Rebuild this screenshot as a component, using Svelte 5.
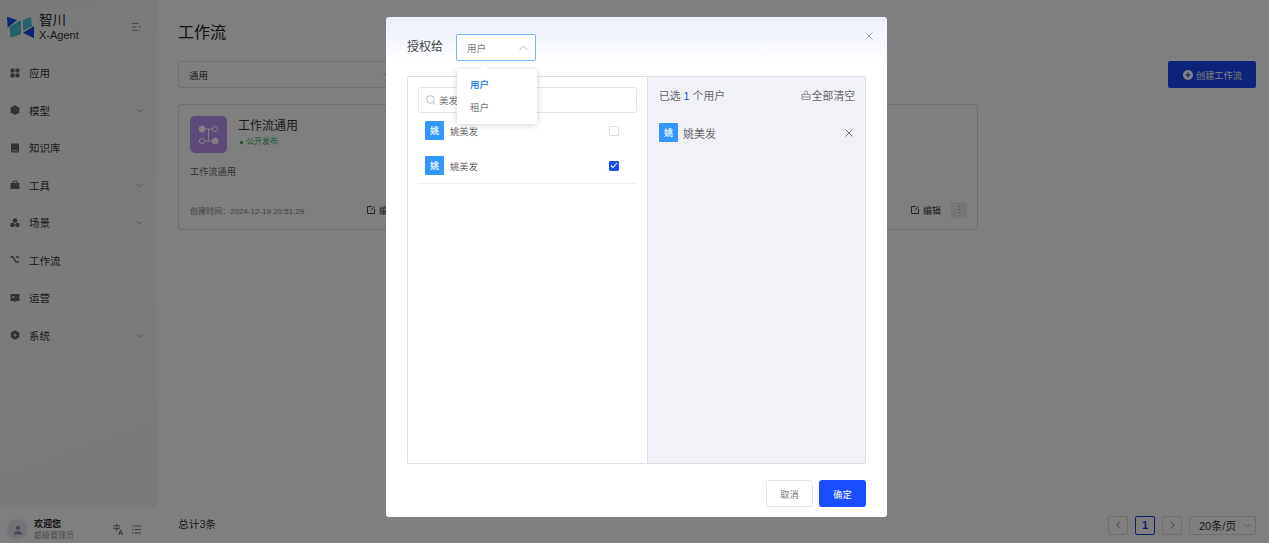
<script>
  const menu = [
    { label: "应用", icon: "apps" },
    { label: "模型", icon: "cube", arrow: true },
    { label: "知识库", icon: "book" },
    { label: "工具", icon: "case", arrow: true },
    { label: "场景", icon: "nodes", arrow: true },
    { label: "工作流", icon: "flow" },
    { label: "运营", icon: "board" },
    { label: "系统", icon: "gear", arrow: true }
  ];

  // the dialog covers the other two cards, only the first has its text showing
  const cards = [
    { title: "工作流通用", desc: "工作流通用", time: "2024-12-19 20:51:29", actions: true },
    {},
    { actions: true }
  ];
</script>

{#snippet avatar()}
  <span class="avatar">姚</span>
{/snippet}

<div class="page">
  <aside class="sidebar">
    <div class="side-top">
      <div class="brand">
        <svg class="logo" width="27" height="23" viewBox="0 0 27 23">
          <path d="M0 .7L10 4L.7 11.700Z" fill="#1a4de0" />
          <path d="M2.700 10.700L14 4V18.300L3.300 21.700Z" fill="#4cc0d4" />
          <path d="M16 4L24 1L25 10L16 15Z" fill="#4cc0d4" />
          <path d="M27 10V22.300L16 16.700Z" fill="#1a4de0" />
        </svg>
        <div class="brand-text">
          <div class="brand-name">智川</div>
          <div class="brand-sub">X-Agent</div>
        </div>
        <svg class="collapse" width="9" height="8" viewBox="0 0 9 8" fill="none" stroke="#888" stroke-width="0.900">
          <path d="M0 .5h6.500M0 4h4.500M0 7.500h6.500M9 2.500L7.500 4 9 5.500" />
        </svg>
      </div>
      <nav class="menu">
        {#each menu as item}
          <div class="menu-item">
            <svg class="menu-icon" width="10" height="10" viewBox="0 0 10 10" fill="#666">
              {#if item.icon === "apps"}
                <rect x="0.500" y="0.500" width="4" height="4" rx="1" /><rect x="5.500" y="0.500" width="4" height="4" rx="1" />
                <rect x="0.500" y="5.500" width="4" height="4" rx="1" /><rect x="5.500" y="5.500" width="4" height="4" rx="1" />
              {:else if item.icon === "cube"}
                <path d="M5 0.300L9.500 2.700V7.500L5 9.900L0.500 7.500V2.700Z" />
              {:else if item.icon === "book"}
                <path d="M1 0.500h8v9H2.500A1.500 1.500 0 0 1 1 8Z" /><rect x="2.500" y="7" width="5.500" height="1.200" fill="#bbb" />
              {:else if item.icon === "case"}
                <path d="M0.500 3h9v6h-9Z" /><path d="M3 3V1.200h4V3" fill="none" stroke="#666" />
              {:else if item.icon === "nodes"}
                <circle cx="5" cy="2.500" r="2.300" /><circle cx="2.500" cy="7" r="2.300" /><circle cx="7.500" cy="7" r="2.300" />
              {:else if item.icon === "flow"}
                <path d="M0.500 2h2.500l3 5h3M6 2h3" fill="none" stroke="#666" stroke-width="1.300" />
              {:else if item.icon === "board"}
                <path d="M0.500 1h9v7h-3.500L5 9.500 4 8H0.500Z" /><rect x="2" y="3" width="2.500" height="2" fill="#bbb" />
              {:else}
                <path d="M5 0.300L9.300 2.700V7.300L5 9.700L0.700 7.300V2.700Z" /><circle cx="5" cy="5" r="1.600" fill="#ccc" />
              {/if}
            </svg>
            <span class="menu-label">{item.label}</span>
            {#if item.arrow}
              <svg class="chevron" width="7" height="5" viewBox="0 0 7 5" fill="none" stroke="#999" stroke-width="0.800"><path d="M0.500 1L3.500 4L6.500 1" /></svg>
            {/if}
          </div>
        {/each}
      </nav>
    </div>
    <div class="user">
      <div class="user-avatar">
        <svg width="10" height="10" viewBox="0 0 10 10" fill="#8a94a8"><circle cx="5" cy="3" r="2.200" /><path d="M0.800 9.500C1 6.800 3 6 5 6s4 .8 4.200 3.500Z" /></svg>
      </div>
      <div class="user-text">
        <div class="user-name">欢迎您</div>
        <div class="user-role">超级管理员</div>
      </div>
      <span class="lang"><span>中</span><span class="lang-a">A</span></span>
      <svg width="9" height="9" viewBox="0 0 9 9" fill="none" stroke="#666" stroke-width="0.900"><path d="M0 1h1.300M2.500 1H9M0 4.500h1.300M2.500 4.500H9M0 8h1.300M2.500 8H9" /></svg>
    </div>
  </aside>

  <main class="main">
    <h1 class="title">工作流</h1>
    <div class="toolbar">
      <div class="filter">
        通用
        <svg width="7" height="5" viewBox="0 0 7 5" fill="none" stroke="#999" stroke-width="0.800"><path d="M0.500 1L3.500 4L6.500 1" /></svg>
      </div>
      <button class="create">
        <svg width="10" height="10" viewBox="0 0 10 10"><circle cx="5" cy="5" r="5" fill="#fff" /><path d="M5 2.500v5M2.500 5h5" stroke="#1a45d8" stroke-width="1.200" /></svg>
        创建工作流
      </button>
    </div>
    <div class="cards">
      {#each cards as card}
        <section class="card">
          {#if card.title}
            <div class="card-head">
              <div class="card-icon">
                <svg width="22" height="20" viewBox="0 0 22 20" fill="none" stroke="#fff" stroke-width="1">
                  <circle cx="4" cy="4" r="3" fill="#fff" /><circle cx="17" cy="4" r="2.600" />
                  <circle cx="4" cy="16" r="2.600" /><circle cx="17" cy="16" r="3" fill="#fff" />
                  <path d="M7 4h7M7 16h7M10.500 4v12" />
                </svg>
              </div>
              <div>
                <div class="card-title">{card.title}</div>
                <div class="card-status"><i class="dot"></i>公开发布</div>
              </div>
            </div>
            <div class="card-desc">{card.desc}</div>
          {/if}
          {#if card.actions}
            <div class="card-foot">
              <span class="card-time">{card.time ? `创建时间：${card.time}` : ""}</span>
              <span class="edit">
                <svg width="8" height="8" viewBox="0 0 8 8" fill="none" stroke="#333" stroke-width="0.900"><path d="M5 .5H.5v7h7V3M3.500 4.500L7.500 .5" /></svg>
                编辑
              </span>
              <span class="more">⋮</span>
            </div>
          {/if}
        </section>
      {/each}
    </div>
    <footer class="footer">
      <span class="total">总计3条</span>
      <div class="pager">
        <span class="pg">
          <svg width="5" height="8" viewBox="0 0 5 8" fill="none" stroke="#888"><path d="M4 .5L1 4l3 3.500" /></svg>
        </span>
        <span class="pg current">1</span>
        <span class="pg">
          <svg width="5" height="8" viewBox="0 0 5 8" fill="none" stroke="#888"><path d="M1 .5L4 4 1 7.500" /></svg>
        </span>
        <span class="size">20条/页
          <svg width="7" height="5" viewBox="0 0 7 5" fill="none" stroke="#999" stroke-width="0.800"><path d="M0.500 1L3.500 4L6.500 1" /></svg>
        </span>
      </div>
    </footer>
  </main>

  <div class="mask"></div>

  <div class="dialog">
    <header class="dialog-head">
      <span class="dialog-title">授权给</span>
      <div class="select">
        用户
        <svg width="9" height="6" viewBox="0 0 9 6" fill="none" stroke="#aaa" stroke-width="0.900"><path d="M.5 5L4.500 1l4 4" /></svg>
      </div>
      <svg class="close" width="8" height="8" viewBox="0 0 8 8" stroke="#999" stroke-width="0.800"><path d="M.5 .5l7 7M7.500 .5l-7 7" /></svg>
    </header>

    <div class="transfer">
      <div class="pane-left">
        <div class="search">
          <svg width="10" height="10" viewBox="0 0 10 10" fill="none" stroke="#aaa" stroke-width="0.800"><circle cx="4.500" cy="4.500" r="3.800" /><path d="M7.300 7.300L9.500 9.500" /></svg>
          美发
        </div>
        <div class="row">
          {@render avatar()}
          <span class="row-name">姚美发</span>
          <span class="check"></span>
        </div>
        <div class="row last">
          {@render avatar()}
          <span class="row-name">姚美发</span>
          <span class="check on">
            <svg width="8" height="7" viewBox="0 0 8 7" fill="none" stroke="#fff" stroke-width="1.100"><path d="M1 3.500l2 2 4-4.500" /></svg>
          </span>
        </div>
      </div>
      <div class="pane-right">
        <div class="right-head">
          <span>已选 <b>1</b> 个用户</span>
          <span class="clear">
            <svg width="10" height="10" viewBox="0 0 10 10" fill="none" stroke="#777" stroke-width="0.800"><path d="M3.500 4V2.500a1.500 1.500 0 0 1 3 0V4M1 4.500h8v5H1ZM1 7h8" /></svg>
            全部清空
          </span>
        </div>
        <div class="picked">
          {@render avatar()}
          <span class="picked-name">姚美发</span>
          <svg width="8" height="8" viewBox="0 0 8 8" stroke="#666" stroke-width="0.900"><path d="M.5 .5l7 7M7.500 .5l-7 7" /></svg>
        </div>
      </div>
    </div>

    <div class="dialog-foot">
      <button class="btn">取消</button>
      <button class="btn primary">确定</button>
    </div>

    <div class="dropdown">
      <span class="arrow"></span>
      <div class="opt active">用户</div>
      <div class="opt">租户</div>
    </div>
  </div>
</div>

<style>
  :global(body) {
    margin: 0;
    background: #fff;
    font-family: "Liberation Sans", "Noto Sans CJK SC", sans-serif;
    color: #333;
  }

  .page {
    position: relative;
    display: flex;
    width: 1269px;
    height: 543px;
    overflow: hidden;
  }

  .sidebar {
    display: flex;
    flex-direction: column;
    width: 157px;
    height: 543px;
    flex-shrink: 0;
  }

  .side-top {
    display: flex;
    flex-direction: column;
    flex: 1;
    background: linear-gradient(160deg, #f5f5f5, #f8f8f8 55%, #f4f4f4);
  }

  .brand {
    display: flex;
    align-items: center;
    height: 38px;
    padding: 8px 16px 0 7px;
  }

  .logo {
    margin: 1px 5px 0 0;
  }

  .brand-text {
    flex: 1;
  }

  .brand-name {
    font-size: 13.500px;
    line-height: 15px;
    color: #222;
  }

  .brand-sub {
    font-size: 11px;
    line-height: 14px;
    color: #333;
  }

  .menu {
    display: flex;
    flex-direction: column;
    margin-top: 8px;
    flex: 1;
  }

  .menu-item {
    display: flex;
    align-items: center;
    height: 37.5px;
    padding: 0 14px 0 10px;
  }

  .menu-icon {
    margin-right: 9px;
  }

  .menu-label {
    flex: 1;
    font-size: 10.500px;
    color: #333;
  }

  .user {
    display: flex;
    align-items: center;
    box-sizing: border-box;
    height: 36px;
    padding: 9px 16px 0 7px;
    gap: 6px;
  }

  .user-avatar {
    display: flex;
    align-items: center;
    justify-content: center;
    width: 21px;
    height: 21px;
    border-radius: 50%;
    background: #e6e9f0;
  }

  .user-text {
    flex: 1;
  }

  .user-name {
    font-size: 9px;
    line-height: 11px;
    font-weight: 700;
    color: #222;
  }

  .user-role {
    font-size: 8px;
    line-height: 11px;
    color: #999;
  }

  .lang {
    display: flex;
    flex-direction: column;
    width: 10px;
    margin-right: 3px;
    font-size: 7px;
    line-height: 5px;
    color: #444;
  }

  .lang-a {
    align-self: flex-end;
  }

  .main {
    display: flex;
    flex-direction: column;
    flex: 1;
    padding: 0 13px 0 21px;
    min-width: 0;
  }

  .title {
    margin: 21px 0 0;
    font-size: 16px;
    line-height: 23px;
    font-weight: 400;
    color: #222;
  }

  .toolbar {
    display: flex;
    align-items: center;
    justify-content: space-between;
    margin-top: 17px;
  }

  .filter {
    display: flex;
    align-items: center;
    justify-content: space-between;
    box-sizing: border-box;
    width: 216px;
    height: 27px;
    padding: 0 3px 0 10px;
    border: 1px solid #ddd;
    border-radius: 3px;
    font-size: 9.500px;
    color: #444;
  }

  .create {
    display: flex;
    align-items: center;
    gap: 3px;
    box-sizing: border-box;
    width: 88px;
    height: 27px;
    padding: 0 0 0 15px;
    border: 0;
    border-radius: 2px;
    background: #1a45f0;
    color: #fff;
    font: inherit;
    font-size: 9.200px;
  }

  .cards {
    display: flex;
    gap: 16px;
    margin-top: 16px;
  }

  .card {
    display: flex;
    flex-direction: column;
    box-sizing: border-box;
    width: 256px;
    height: 126px;
    padding: 11px 10px 11px 11px;
    border: 1px solid #ddd;
    border-radius: 3px;
  }

  .card-head {
    display: flex;
    gap: 11px;
  }

  .card-icon {
    display: flex;
    align-items: center;
    justify-content: center;
    width: 37px;
    height: 37px;
    border-radius: 5px;
    background: #bc94f2;
  }

  .card-title {
    margin-top: 2px;
    font-size: 12px;
    line-height: 16px;
    color: #333;
  }

  .card-status {
    display: flex;
    align-items: center;
    margin-top: 2px;
    font-size: 8px;
    line-height: 12px;
    color: #27ae60;
  }

  .dot {
    width: 3px;
    height: 3px;
    margin: 0 3px 0 2px;
    border-radius: 50%;
    background: #22a83a;
  }

  .card-desc {
    margin-top: 12px;
    font-size: 9.200px;
    line-height: 14px;
    color: #666;
  }

  .card-foot {
    display: flex;
    align-items: center;
    margin-top: auto;
    height: 16px;
  }

  .card-time {
    flex: 1;
    font-size: 8px;
    color: #888;
  }

  .edit {
    display: flex;
    align-items: center;
    gap: 4px;
    margin-right: 10px;
    font-size: 9px;
    color: #333;
  }

  .more {
    width: 16px;
    height: 16px;
    border-radius: 2px;
    background: #eee;
    font-size: 9px;
    line-height: 16px;
    text-align: center;
    color: #777;
  }

  .footer {
    display: flex;
    align-items: center;
    justify-content: space-between;
    margin-top: auto;
    height: 36px;
  }

  .total {
    margin-bottom: 3px;
    font-size: 10.700px;
    color: #333;
  }

  .pager {
    display: flex;
    align-items: center;
    gap: 7px;
  }

  .pg {
    display: flex;
    align-items: center;
    justify-content: center;
    box-sizing: border-box;
    width: 20px;
    height: 19px;
    border: 1px solid #ddd;
    border-radius: 2px;
  }

  .pg.current {
    border-color: #1a45d8;
    color: #1a45d8;
    font-size: 11px;
    font-weight: 700;
  }

  .size {
    display: flex;
    align-items: center;
    justify-content: space-between;
    box-sizing: border-box;
    width: 67px;
    height: 19px;
    padding: 0 4px 0 9px;
    border: 1px solid #ddd;
    border-radius: 2px;
    font-size: 11px;
    color: #333;
  }

  .mask {
    position: absolute;
    inset: 0;
    background: rgba(0, 0, 0, 0.5);
  }

  .dialog {
    position: absolute;
    left: 386px;
    top: 17px;
    display: flex;
    flex-direction: column;
    box-sizing: border-box;
    width: 501px;
    height: 500px;
    padding: 0 21px;
    border-radius: 3px;
    background: linear-gradient(#eaeffb 0, #fff 46px);
  }

  .dialog-head {
    display: flex;
    align-items: center;
    height: 59px;
    flex-shrink: 0;
  }

  .dialog-title {
    margin: -2px 14px 0 0;
    font-size: 12px;
    color: #444;
  }

  .select {
    display: flex;
    align-items: center;
    justify-content: space-between;
    box-sizing: border-box;
    width: 80px;
    height: 27px;
    margin: 2px 0 0 -1px;
    padding: 0 7px 0 10px;
    border: 1px solid #74b3f7;
    border-radius: 2px;
    background: #fff;
    font-size: 9.500px;
    color: #777;
  }

  .close {
    position: absolute;
    right: 14px;
    top: 15px;
  }

  .transfer {
    display: flex;
    box-sizing: border-box;
    height: 388px;
    border: 1px solid #dcdfe6;
    border-radius: 2px;
  }

  .pane-left {
    box-sizing: border-box;
    width: 240px;
    padding: 10px 10px 0;
    border-right: 1px solid #dcdfe6;
  }

  .search {
    display: flex;
    align-items: center;
    gap: 3px;
    box-sizing: border-box;
    height: 26px;
    padding-left: 7px;
    border: 1px solid #e4e6eb;
    border-radius: 2px;
    font-size: 9.500px;
    color: #777;
  }

  .row {
    display: flex;
    align-items: center;
    height: 35px;
    padding: 0 18px 0 7px;
  }

  .row.last {
    border-bottom: 1px solid #eef0f4;
  }

  .row-name {
    flex: 1;
    margin-left: 6px;
    font-size: 9.300px;
    color: #666;
  }

  .avatar {
    display: flex;
    align-items: center;
    justify-content: center;
    width: 19px;
    height: 19px;
    border-radius: 1px;
    background: #3296fa;
    color: #fff;
    font-size: 9px;
    font-weight: 500;
  }

  .check {
    display: flex;
    align-items: center;
    justify-content: center;
    box-sizing: border-box;
    width: 10px;
    height: 10px;
    border: 1px solid #dcdfe6;
    border-radius: 1px;
    background: #fff;
  }

  .check.on {
    border-color: #1a4df0;
    background: #1a4df0;
  }

  .pane-right {
    flex: 1;
    padding: 0 10px 0 11px;
    background: #f1f2f7;
  }

  .right-head {
    display: flex;
    align-items: center;
    justify-content: space-between;
    height: 35px;
    font-size: 10.800px;
    color: #666;
  }

  .right-head b {
    font-weight: 400;
    color: #1a4df0;
  }

  .clear {
    display: flex;
    align-items: center;
    gap: 1px;
  }

  .picked {
    display: flex;
    align-items: center;
    margin-top: 11px;
    padding-right: 2px;
  }

  .picked-name {
    flex: 1;
    margin-left: 5px;
    font-size: 11px;
    color: #666;
  }

  .dialog-foot {
    display: flex;
    justify-content: flex-end;
    gap: 6px;
    margin-top: 16px;
  }

  .btn {
    box-sizing: border-box;
    width: 47px;
    height: 27px;
    padding: 0;
    border: 1px solid #e4e6eb;
    border-radius: 3px;
    background: #fff;
    color: #777;
    font: inherit;
    font-size: 9.200px;
  }

  .btn.primary {
    border: 0;
    background: #1a4dff;
    color: #fff;
  }

  .dropdown {
    position: absolute;
    left: 71px;
    top: 52px;
    box-sizing: border-box;
    width: 80px;
    height: 55px;
    padding-top: 4px;
    border-radius: 2px;
    background: #fff;
    box-shadow: 0 1px 6px rgba(0, 0, 0, 0.18);
  }

  .arrow {
    position: absolute;
    left: 24px;
    top: -3px;
    width: 7px;
    height: 7px;
    background: #fff;
    transform: rotate(45deg);
  }

  .opt {
    position: relative;
    height: 23px;
    padding-left: 13px;
    font-size: 9.500px;
    line-height: 23px;
    color: #777;
  }

  .opt.active {
    color: #2f8cf0;
    font-weight: 700;
  }
</style>
